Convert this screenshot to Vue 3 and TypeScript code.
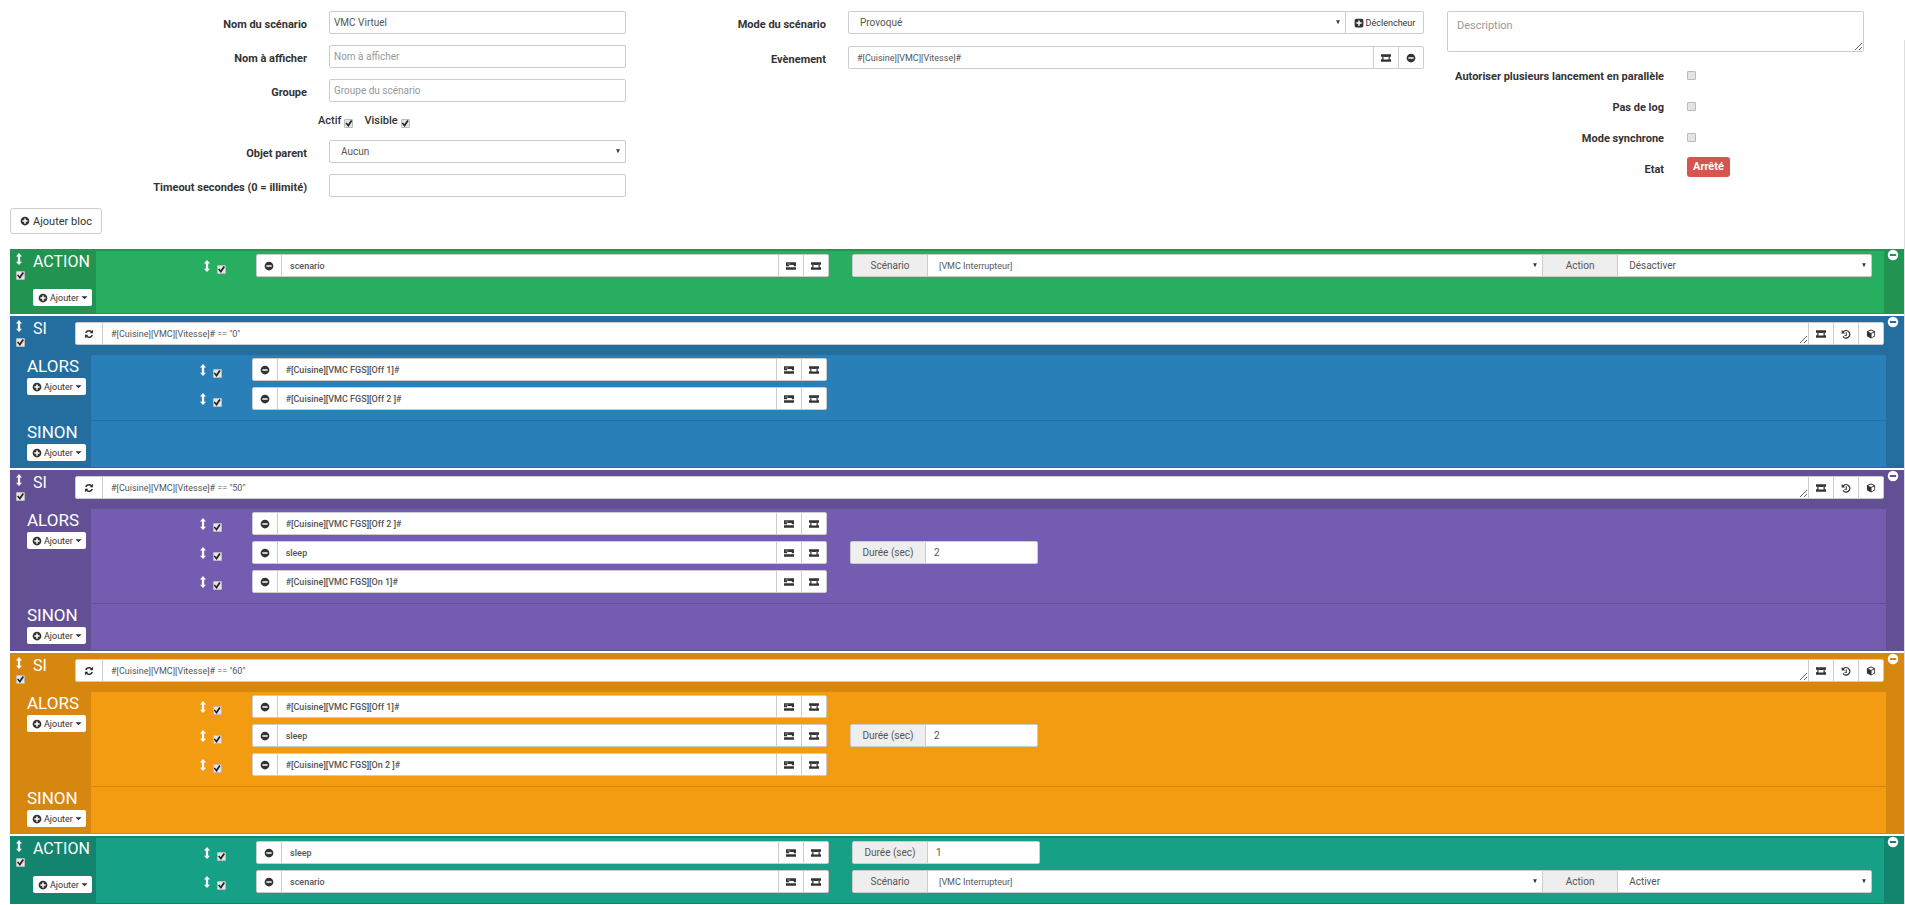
<script setup lang="ts">
import { h, reactive } from 'vue'

interface Row {
  cmd: string
  kind?: 'sleep' | 'scenario'
  value?: string
}
interface Block {
  type: 'action' | 'if'
  tone: string
  expression?: string
  rows: Row[]
}

const shapes: Record<string, string> = {
  plus: 'M8 1a7 7 0 1 0 0 14A7 7 0 0 0 8 1zM6.8 3.8h2.4v3h3v2.4h-3v3H6.8v-3h-3V6.8h3z',
  minus: 'M8 1a7 7 0 1 0 0 14A7 7 0 0 0 8 1zM3.8 6.8h8.4v2.4H3.8z',
  plusSquare: 'M3.5 1h9A2.5 2.5 0 0 1 15 3.5v9a2.5 2.5 0 0 1-2.5 2.5h-9A2.5 2.5 0 0 1 1 12.5v-9A2.5 2.5 0 0 1 3.5 1zM6.8 3.8h2.4v3h3v2.4h-3v3H6.8v-3h-3V6.8h3z',
  tasks: 'M0 2h16v6.500h-3.500V6.500H5v2H0zM2 4.500v.8h5v-.8zM0 10h16v4H0z',
  list: 'M0 2h16v4h-2v4h2v4H0v-4h2V6H0zM4 5.500v5h8v-5l-1.500 1h-5z',
  refresh: 'M8 1.5a6.5 6.5 0 0 0-6.3 5h2.5A4 4 0 0 1 8 4c1.1 0 2 .4 2.7 1L9 6.8h5.500V1.300l-2 2A6.500 6.500 0 0 0 8 1.500zM1.500 9.200v5.500l2-2a6.500 6.500 0 0 0 10.800-3.200h-2.500A4 4 0 0 1 5.300 11L7 9.200z',
  history: 'M1 1.5v5.5h5.5L4.6 5.1A4.8 4.8 0 1 1 4 11.2l-1.700 1.300A7 7 0 1 0 3.100 3.600zM7.500 5v4.800h-2v1.500h3.700V5z',
  cube: 'M8 .8 1.5 3.6v8L8 15.3l6.5-3.700v-8zM8 2.400l4.500 1.900L8 6.300 3.500 4.300zM8.800 7.700l4.400-2v5.100l-4.400 2.600z',
  arrows: 'M8 0l4 4.5H9.500v7H12L8 16l-4-4.500h2.500v-7H4z',
  caret: 'M1 5h14L8 12z',
  down: 'M3 3h10L8 14z',
}

const Icon = (props: { name: string }) =>
  h('svg', { viewBox: '0 0 16 16', 'aria-hidden': 'true' }, [
    h('path', { d: shapes[props.name], 'fill-rule': 'evenodd', fill: 'currentColor' }),
  ])
Icon.props = ['name']

const form = reactive({
  name: 'VMC Virtuel',
  display: '',
  group: '',
  active: true,
  visible: true,
  timeout: '',
  event: '#[Cuisine][VMC][Vitesse]#',
  description: '',
})

const options = ['Autoriser plusieurs lancement en parallèle', 'Pas de log', 'Mode synchrone']

const blocks = reactive<Block[]>([
  { type: 'action', tone: 'green', rows: [{ cmd: 'scenario', kind: 'scenario', value: 'Désactiver' }] },
  {
    type: 'if',
    tone: 'blue',
    expression: '#[Cuisine][VMC][Vitesse]# == "0"',
    rows: [{ cmd: '#[Cuisine][VMC FGS][Off 1]#' }, { cmd: '#[Cuisine][VMC FGS][Off 2 ]#' }],
  },
  {
    type: 'if',
    tone: 'purple',
    expression: '#[Cuisine][VMC][Vitesse]# == "50"',
    rows: [
      { cmd: '#[Cuisine][VMC FGS][Off 2 ]#' },
      { cmd: 'sleep', kind: 'sleep', value: '2' },
      { cmd: '#[Cuisine][VMC FGS][On 1]#' },
    ],
  },
  {
    type: 'if',
    tone: 'orange',
    expression: '#[Cuisine][VMC][Vitesse]# == "60"',
    rows: [
      { cmd: '#[Cuisine][VMC FGS][Off 1]#' },
      { cmd: 'sleep', kind: 'sleep', value: '2' },
      { cmd: '#[Cuisine][VMC FGS][On 2 ]#' },
    ],
  },
  {
    type: 'action',
    tone: 'teal',
    rows: [
      { cmd: 'sleep', kind: 'sleep', value: '1' },
      { cmd: 'scenario', kind: 'scenario', value: 'Activer' },
    ],
  },
])
</script>

<template>
  <main class="page">
    <form class="settings" @submit.prevent>
      <div class="col left">
        <div class="field">
          <label for="name">Nom du scénario</label>
          <input id="name" v-model="form.name" class="ctl" type="text" />
        </div>
        <div class="field">
          <label for="display">Nom à afficher</label>
          <input id="display" v-model="form.display" class="ctl" type="text" placeholder="Nom à afficher" />
        </div>
        <div class="field">
          <label for="group">Groupe</label>
          <input id="group" v-model="form.group" class="ctl" type="text" placeholder="Groupe du scénario" />
        </div>
        <div class="field flags">
          <span></span>
          <div class="flag-list">
            <label>Actif <input v-model="form.active" type="checkbox" class="tick" /></label>
            <label>Visible <input v-model="form.visible" type="checkbox" class="tick" /></label>
          </div>
        </div>
        <div class="field">
          <label for="parent">Objet parent</label>
          <span class="pick">
            <select id="parent" class="ctl"><option>Aucun</option></select>
            <Icon name="down" class="pick-arrow" />
          </span>
        </div>
        <div class="field">
          <label for="timeout">Timeout secondes (0 = illimité)</label>
          <input id="timeout" v-model="form.timeout" class="ctl" type="text" />
        </div>
      </div>

      <div class="col middle">
        <div class="field">
          <label for="mode">Mode du scénario</label>
          <div class="group">
            <span class="pick">
              <select id="mode" class="ctl"><option>Provoqué</option></select>
              <Icon name="down" class="pick-arrow" />
            </span>
            <button type="button" class="btn trigger"><Icon name="plusSquare" class="icon" /> Déclencheur</button>
          </div>
        </div>
        <div class="field">
          <label for="event">Evènement</label>
          <div class="group">
            <input id="event" v-model="form.event" class="ctl wide code" type="text" />
            <button type="button" class="btn" aria-label="Choisir une commande"><Icon name="list" class="icon" /></button>
            <button type="button" class="btn" aria-label="Supprimer"><Icon name="minus" class="icon" /></button>
          </div>
        </div>
      </div>

      <div class="col right">
        <textarea v-model="form.description" class="description" placeholder="Description" aria-label="Description"></textarea>
        <div v-for="(text, i) in options" :key="text" class="field">
          <label :for="'option-' + i">{{ text }}</label>
          <input :id="'option-' + i" type="checkbox" class="tick" />
        </div>
        <div class="field">
          <span class="caption">Etat</span>
          <span class="badge">Arrêté</span>
        </div>
      </div>
    </form>

    <button type="button" class="add-block"><Icon name="plus" class="icon" /> Ajouter bloc</button>

    <section v-for="(block, b) in blocks" :key="b" class="block" :class="[block.type, block.tone]">
      <div class="lead">
        <div class="handle">
          <Icon name="arrows" class="grip" />
          <input type="checkbox" class="tick" checked aria-label="Activer le bloc" />
        </div>
        <div class="lead-main">
          <h2>{{ block.type === 'if' ? 'SI' : 'ACTION' }}</h2>
          <button v-if="block.type === 'action'" type="button" class="add">
            <Icon name="plus" class="icon" /> Ajouter <Icon name="caret" class="caret" />
          </button>
        </div>
      </div>

      <div v-if="block.type === 'if'" class="group condition">
        <button type="button" class="btn refresh" aria-label="Répéter"><Icon name="refresh" class="icon" /></button>
        <textarea v-model="block.expression" class="ctl expression code" rows="1" aria-label="Condition"></textarea>
        <button type="button" class="btn" aria-label="Choisir une commande"><Icon name="list" class="icon" /></button>
        <button type="button" class="btn" aria-label="Choisir un scénario"><Icon name="history" class="icon" /></button>
        <button type="button" class="btn" aria-label="Choisir un équipement"><Icon name="cube" class="icon" /></button>
      </div>

      <div class="body">
        <div class="branch">
          <div v-if="block.type === 'if'" class="side">
            <h2>ALORS</h2>
            <button type="button" class="add">
              <Icon name="plus" class="icon" /> Ajouter <Icon name="caret" class="caret" />
            </button>
          </div>
          <div class="rows">
            <div v-for="(row, r) in block.rows" :key="r" class="row">
              <div class="row-handle">
                <Icon name="arrows" class="grip" />
                <input type="checkbox" class="tick" checked aria-label="Activer l'action" />
              </div>
              <div class="group">
                <button type="button" class="btn" aria-label="Supprimer"><Icon name="minus" class="icon" /></button>
                <input v-model="row.cmd" class="ctl command code" type="text" aria-label="Commande" />
                <button type="button" class="btn" aria-label="Choisir un mot-clé"><Icon name="tasks" class="icon" /></button>
                <button type="button" class="btn" aria-label="Choisir une commande"><Icon name="list" class="icon" /></button>
              </div>
              <div v-if="row.kind === 'sleep'" class="group params short">
                <label class="addon" :for="`sleep-${b}-${r}`">Durée (sec)</label>
                <input :id="`sleep-${b}-${r}`" v-model="row.value" class="ctl wide" type="text" />
              </div>
              <div v-else-if="row.kind === 'scenario'" class="group params">
                <label class="addon" :for="`scenario-${b}-${r}`">Scénario</label>
                <span class="pick target">
                  <select :id="`scenario-${b}-${r}`" class="ctl code"><option>[VMC Interrupteur]</option></select>
                  <Icon name="down" class="pick-arrow" />
                </span>
                <label class="addon" :for="`state-${b}-${r}`">Action</label>
                <span class="pick state">
                  <select :id="`state-${b}-${r}`" class="ctl"><option>{{ row.value }}</option></select>
                  <Icon name="down" class="pick-arrow" />
                </span>
              </div>
            </div>
          </div>
        </div>
        <div v-if="block.type === 'if'" class="branch otherwise">
          <div class="side">
            <h2>SINON</h2>
            <button type="button" class="add">
              <Icon name="plus" class="icon" /> Ajouter <Icon name="caret" class="caret" />
            </button>
          </div>
          <div class="rows"></div>
        </div>
      </div>

      <button type="button" class="remove" aria-label="Supprimer le bloc"><Icon name="minus" class="icon" /></button>
    </section>
  </main>
</template>

<style>
body {
  margin: 0;
  background: #fff;
}
</style>

<style scoped>
* {
  box-sizing: border-box;
}
.page {
  font-family: Roboto, "Liberation Sans", sans-serif;
  font-size: 11px;
  color: #333;
  padding: 11px 1px 0 10px;
  background: linear-gradient(#ddd, #ddd) right 0 top 40px / 1px 100% no-repeat;
}
button,
input,
select,
textarea {
  font: inherit;
  color: #333;
  margin: 0;
}
button {
  cursor: pointer;
}
.icon {
  width: 10px;
  height: 10px;
  flex: none;
}

/* settings form */
.settings {
  display: grid;
  grid-template-columns: 616fr 798fr 440fr 40fr;
}
.field {
  display: grid;
  column-gap: 22px;
  align-items: center;
  height: 23px;
  margin-bottom: 11px;
}
.left .field {
  grid-template-columns: 297fr 297fr;
}
.middle .field {
  grid-template-columns: 200fr 576fr;
  margin-bottom: 12px;
}
.right .field {
  grid-template-columns: 240fr 177fr;
  height: 22px;
  margin-bottom: 9px;
  column-gap: 23px;
}
.field > label,
.caption {
  text-align: right;
  font-weight: 700;
  padding-top: 3px;
  white-space: nowrap;
}
.left .flags {
  height: 16px;
  column-gap: 11px;
  grid-template-columns: 297fr 308fr;
}
.flag-list {
  display: flex;
  gap: 11px;
  font-weight: 500;
}
.flag-list label {
  display: flex;
  gap: 3px;
}
.flag-list .tick {
  margin-top: 5px;
}
.ctl {
  display: block;
  width: 100%;
  min-width: 0;
  height: 23px;
  padding: 0 4px;
  font-size: 10px;
  color: #555;
  background: #fff;
  border: 1px solid #ccc;
  border-radius: 2px;
  outline: none;
}
.ctl.code {
  font-size: 9px;
}
.ctl::placeholder,
.description::placeholder {
  color: #999;
}
.pick {
  position: relative;
  display: block;
  min-width: 0;
}
select.ctl {
  appearance: none;
  padding: 0 18px 0 11px;
}
.pick-arrow {
  position: absolute;
  right: 5px;
  top: 8px;
  width: 6px;
  height: 6px;
  pointer-events: none;
}
.group {
  display: flex;
}
.group > .pick,
.group > .ctl {
  flex: 1;
}
.group .wide,
.group .command {
  padding: 0 8px;
}
.group > * + * {
  margin-left: -1px;
}
.group > :not(:first-child),
.group > :not(:first-child) .ctl {
  border-top-left-radius: 0;
  border-bottom-left-radius: 0;
}
.group > :not(:last-child),
.group > :not(:last-child) .ctl {
  border-top-right-radius: 0;
  border-bottom-right-radius: 0;
}
.btn {
  display: flex;
  align-items: center;
  justify-content: center;
  gap: 2px;
  flex: none;
  width: 26px;
  height: 23px;
  padding: 0;
  background: #fff;
  border: 1px solid #ccc;
  border-radius: 2px;
}
.trigger {
  width: 79px;
  font-size: 9px;
}
.tick {
  appearance: none;
  display: block;
  flex: none;
  width: 9px;
  height: 9px;
  background: #e4e4e4;
  border: 1px solid #bbb;
  border-radius: 1px;
}
.tick:checked::before {
  content: "";
  display: block;
  width: 7px;
  height: 7px;
  background: #222;
  clip-path: polygon(0 48%, 18% 36%, 38% 60%, 80% 0, 100% 14%, 42% 100%);
}
.description {
  display: block;
  width: calc(100% - 23px);
  height: 41px;
  margin: 0 0 12px 23px;
  padding: 7px 9px;
  line-height: 14px;
  border: 1px solid #ccc;
  border-radius: 2px;
  outline: none;
}
.badge {
  justify-self: start;
  align-self: start;
  padding: 0 6px;
  line-height: 20px;
  font-weight: 700;
  color: #fff;
  background: #d9534f;
  border-radius: 3px;
}
.add-block {
  display: flex;
  align-items: center;
  gap: 3px;
  height: 26px;
  margin-bottom: 15px;
  padding: 0 9px;
  background: #fff;
  border: 1px solid #ccc;
  border-radius: 3px;
}

/* scenario blocks */
.green {
  --light: #27ae60;
  --dark: #229351;
}
.blue {
  --light: #2980b9;
  --dark: #246e9f;
}
.purple {
  --light: #745cb0;
  --dark: #634f93;
}
.orange {
  --light: #f39c12;
  --dark: #d68710;
}
.teal {
  --light: #16a085;
  --dark: #13846d;
}
.block {
  display: grid;
  margin-bottom: 2px;
  background: var(--dark);
}
.block.action {
  grid-template-columns: 86px 1fr 20px;
}
.block.if {
  grid-template-columns: 65px 1fr 20px;
}
.lead {
  display: flex;
}
.handle {
  width: 23px;
  padding: 4px 0 0 6px;
  flex: none;
}
.handle .tick {
  margin-top: 6px;
}
.grip {
  display: block;
  flex: none;
  width: 12px;
  height: 12px;
  margin-left: -3px;
  color: #fff;
}
h2 {
  margin: 0;
  font-size: 16px;
  font-weight: 400;
  line-height: 22px;
  color: #fff;
}
.lead h2 {
  padding-top: 2px;
}
.lead .add {
  margin: 16px 0 8px;
}
.add {
  display: flex;
  align-items: center;
  gap: 2px;
  height: 17px;
  padding: 0 4px 0 5px;
  font-size: 9px;
  background: #fff;
  border: 0;
  border-radius: 2px;
}
.caret {
  width: 7px;
  height: 7px;
}
.condition {
  padding: 6px 0 10px;
}
.refresh {
  width: 28px;
}
.expression {
  padding: 4px 8px;
  line-height: 14px;
  overflow: hidden;
}
.if .body {
  grid-column: 1 / -1;
  grid-row: 2;
  margin: 0 18px 1px 0;
}
.if .branch {
  display: grid;
  grid-template-columns: 81px 1fr;
}
.side {
  padding-left: 17px;
}
.side h2 {
  font-size: 17px;
}
.side .add {
  margin-top: 1px;
}
.rows {
  background: var(--light);
  padding: 3px 0 4px;
}
.action .body {
  display: grid;
  margin: 2px 0 1px;
}
.action .branch {
  display: grid;
}
.otherwise .side {
  height: 46px;
  margin-top: 1px;
}
.otherwise .rows {
  border-top: 1px solid var(--dark);
}
.row {
  display: grid;
  grid-template-columns: 160fr 573fr 23fr 1020fr 12fr;
  margin-bottom: 6px;
}
.row-handle {
  display: flex;
  justify-content: flex-end;
  align-items: flex-start;
  gap: 4px;
  padding: 6px 30px 0 0;
}
.row-handle .tick {
  margin-top: 5px;
}
.row .command {
  font-weight: 500;
}
.params {
  grid-column: 4;
}
.short {
  width: 18%;
  min-width: 188px;
}
.group > .target {
  flex: 614 1 0;
}
.group > .state {
  flex: 254 1 0;
}
.addon {
  flex: none;
  width: 76px;
  height: 23px;
  font-size: 10px;
  line-height: 21px;
  text-align: center;
  color: #555;
  background: #eee;
  border: 1px solid #ccc;
  border-radius: 2px;
}
.remove {
  display: block;
  height: 12px;
  padding: 0 0 0 3px;
  text-align: left;
  line-height: 0;
  background: none;
  border: 0;
}
.remove .icon {
  width: 12px;
  height: 12px;
  color: #fff;
}
</style>
